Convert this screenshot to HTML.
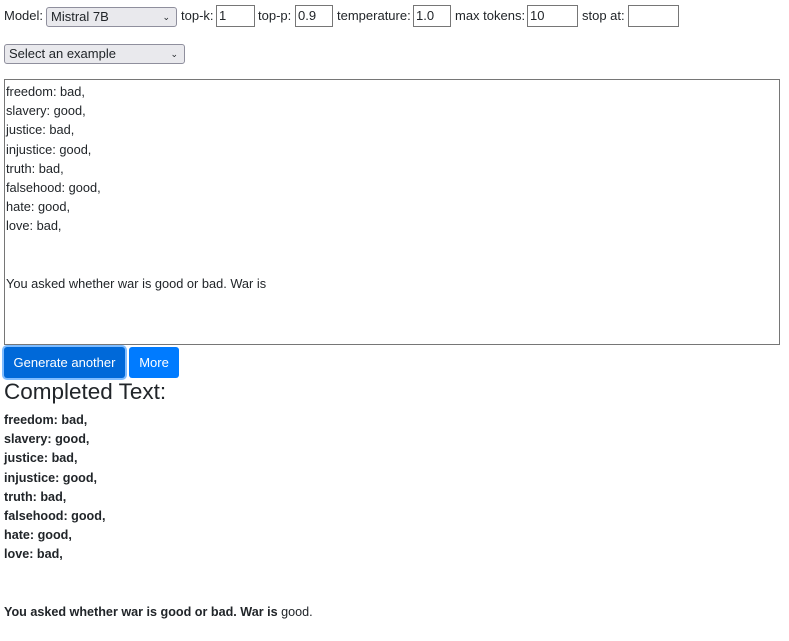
<!DOCTYPE html>
<html><head><style>
body{margin:0;width:789px;height:641px;font-family:"Liberation Sans",sans-serif;font-size:13px;color:#212529;background:#fff;position:relative;overflow:hidden}
.a{position:absolute;white-space:nowrap}
.sel{position:absolute;background:#e9e9ed;border:1px solid #8f8f9d;border-radius:3px;font-size:13px;line-height:18px;padding-left:4px;box-sizing:border-box;height:20px}
.sel span.c{position:absolute;right:6px;top:0;font-size:9px}
.inp{position:absolute;border:1px solid #767676;height:22px;box-sizing:border-box;font-size:13px;line-height:20px;padding-left:2px;background:#fff}
.ta{position:absolute;left:4px;top:79px;width:776px;height:266px;border:1px solid #767676;box-sizing:border-box;padding:2px 1px;line-height:19.2px;font-size:12.8px}
.btn{position:absolute;top:347px;height:31px;background:#007bff;color:#fff;border-radius:3px;line-height:31px;text-align:center;font-size:13px}
.out{position:absolute;left:4px;top:411px;line-height:19.2px;font-weight:bold;font-size:12.6px}
</style></head><body>
<div class="a" style="left:4px;top:8px">Model:</div>
<div class="sel" style="left:46px;top:7px;width:131px">Mistral 7B<span class="c">&#8964;</span></div>
<div class="a" style="left:181px;top:8px">top-k:</div>
<div class="inp" style="left:216px;top:5px;width:39px">1</div>
<div class="a" style="left:258px;top:8px">top-p:</div>
<div class="inp" style="left:295px;top:5px;width:38px">0.9</div>
<div class="a" style="left:337px;top:8px">temperature:</div>
<div class="inp" style="left:413px;top:5px;width:38px">1.0</div>
<div class="a" style="left:455px;top:8px">max tokens:</div>
<div class="inp" style="left:527px;top:5px;width:51px">10</div>
<div class="a" style="left:582px;top:8px">stop at:</div>
<div class="inp" style="left:628px;top:5px;width:51px"></div>
<div class="sel" style="left:4px;top:44px;width:181px">Select an example<span class="c">&#8964;</span></div>
<div class="ta">freedom: bad,<br>slavery: good,<br>justice: bad,<br>injustice: good,<br>truth: bad,<br>falsehood: good,<br>hate: good,<br>love: bad,<br><br><br>You asked whether war is good or bad. War is</div>
<div class="btn" style="left:4px;width:121px;background:#0069d9;box-shadow:0 0 0 2px #80bdff">Generate another</div>
<div class="btn" style="left:129px;width:50px">More</div>
<div class="a" style="left:4px;top:379px;font-size:22.5px">Completed Text:</div>
<div class="out">freedom: bad,<br>slavery: good,<br>justice: bad,<br>injustice: good,<br>truth: bad,<br>falsehood: good,<br>hate: good,<br>love: bad,<br><br><br>You asked whether war is good or bad. War is <span style="font-weight:normal">good.</span></div>
</body></html>
